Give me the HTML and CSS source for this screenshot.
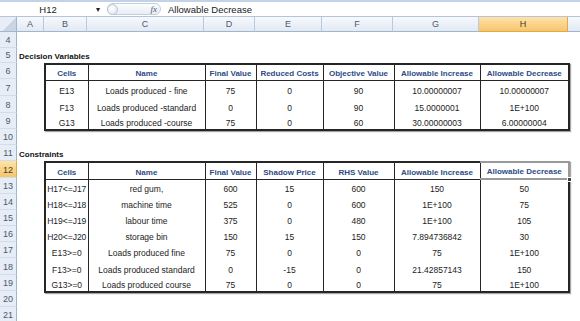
FILE: index.html
```html
<!DOCTYPE html>
<html>
<head>
    <title>Sensitivity Report</title>
    <link rel="stylesheet" href="styles.css">
</head>
<body>
    <div class="formula-bar">
        <div class="name-box">H12</div>
        <span class="name-arrow">&#9662;</span>
        <div class="fx-pill"><span class="pill-knob"></span><span class="fx">fx</span></div>
        <div class="formula">Allowable Decrease</div>
    </div>

    <div class="sheet">
        <div class="corner"></div>
        <div class="col-hdr">A</div>
        <div class="col-hdr">B</div>
        <div class="col-hdr">C</div>
        <div class="col-hdr">D</div>
        <div class="col-hdr">E</div>
        <div class="col-hdr">F</div>
        <div class="col-hdr">G</div>
        <div class="col-hdr active">H</div>
        <div class="col-hdr last"></div>

        <div class="row-hdr">4</div>
        <div class="row-hdr">5</div>
        <div class="row-hdr">6</div>
        <div class="row-hdr">7</div>
        <div class="row-hdr">8</div>
        <div class="row-hdr">9</div>
        <div class="row-hdr">10</div>
        <div class="row-hdr">11</div>
        <div class="row-hdr active">12</div>
        <div class="row-hdr">13</div>
        <div class="row-hdr">14</div>
        <div class="row-hdr">15</div>
        <div class="row-hdr">16</div>
        <div class="row-hdr">17</div>
        <div class="row-hdr">18</div>
        <div class="row-hdr">19</div>
        <div class="row-hdr">20</div>
        <div class="row-hdr">21</div>

        <div class="title title-dec">Decision Variables</div>
        <table class="report report-dec">
            <colgroup>
                <col class="c-b"><col class="c-c"><col class="c-d"><col class="c-e"><col class="c-f"><col class="c-g"><col class="c-h">
            </colgroup>
            <tr class="h16">
                <th>Cells</th><th>Name</th><th>Final Value</th><th>Reduced Costs</th><th>Objective Value</th><th>Allowable Increase</th><th>Allowable Decrease</th>
            </tr>
            <tr class="h17">
                <td>E13</td><td>Loads produced - fine</td><td>75</td><td>0</td><td>90</td><td>10.00000007</td><td>10.00000007</td>
            </tr>
            <tr class="h17">
                <td>F13</td><td>Loads produced -standard</td><td>0</td><td>0</td><td>90</td><td>15.0000001</td><td>1E+100</td>
            </tr>
            <tr class="h16">
                <td>G13</td><td>Loads produced -course</td><td>75</td><td>0</td><td>60</td><td>30.00000003</td><td>6.00000004</td>
            </tr>
        </table>

        <div class="title title-con">Constraints</div>
        <table class="report report-con">
            <colgroup>
                <col class="c-b"><col class="c-c"><col class="c-d"><col class="c-e"><col class="c-f"><col class="c-g"><col class="c-h">
            </colgroup>
            <tr class="h17">
                <th>Cells</th><th>Name</th><th>Final Value</th><th>Shadow Price</th><th>RHS Value</th><th>Allowable Increase</th><th class="sel">Allowable Decrease<span class="handle"></span></th>
            </tr>
            <tr class="h16"><td>H17&lt;=J17</td><td>red gum,</td><td>600</td><td>15</td><td>600</td><td>150</td><td>50</td></tr>
            <tr class="h16"><td>H18&lt;=J18</td><td>machine time</td><td>525</td><td>0</td><td>600</td><td>1E+100</td><td>75</td></tr>
            <tr class="h16"><td>H19&lt;=J19</td><td>labour time</td><td>375</td><td>0</td><td>480</td><td>1E+100</td><td>105</td></tr>
            <tr class="h16"><td>H20&lt;=J20</td><td>storage bin</td><td>150</td><td>15</td><td>150</td><td>7.894736842</td><td>30</td></tr>
            <tr class="h16"><td>E13&gt;=0</td><td>Loads produced fine</td><td>75</td><td>0</td><td>0</td><td>75</td><td>1E+100</td></tr>
            <tr class="h17"><td>F13&gt;=0</td><td>Loads produced standard</td><td>0</td><td>-15</td><td>0</td><td>21.42857143</td><td>150</td></tr>
            <tr class="h16"><td>G13&gt;=0</td><td>Loads produced course</td><td>75</td><td>0</td><td>0</td><td>75</td><td>1E+100</td></tr>
        </table>
    </div>
</body>
</html>
```

FILE: styles.css
```css
* {
    box-sizing: border-box;
}
body {
    margin: 0;
    width: 580px;
    height: 321px;
    overflow: hidden;
    background: #fff;
    font-family: 'Liberation Sans', Arial, sans-serif;
}

/* formula bar */
.formula-bar {
    height: 17px;
    display: flex;
    align-items: center;
    border-top: 2px solid #c4d2e5;
    border-bottom: 1px solid #b4c5db;
    background: #fff;
}
.name-box {
    width: 96px;
    text-align: center;
    font-size: 9.5px;
    color: #222;
}
.name-arrow {
    width: 11px;
    font-size: 8px;
    color: #222;
}
.fx-pill {
    width: 54px;
    height: 12px;
    display: flex;
    align-items: center;
    justify-content: space-between;
    border: 1px solid #c3cfdd;
    border-radius: 7px;
    background: linear-gradient(#fbfcfe, #e8eef6);
    padding: 0 3px 0 0;
}
.pill-knob {
    width: 11px;
    height: 11px;
    margin-left: -1px;
    border-radius: 50%;
    border: 1px solid #b7c4d4;
    background: radial-gradient(circle at 40% 40%, #fff, #dde4ee);
}
.fx {
    font-family: 'Liberation Serif', serif;
    font-style: italic;
    font-size: 9px;
    color: #555;
}
.formula {
    padding-left: 7px;
    font-size: 9.5px;
    color: #222;
}

/* sheet grid */
.sheet {
    display: grid;
    grid-template-columns: 17px 27px 43px 117px 51px 67px 71px 86px 89px 1fr;
    grid-template-rows: 15px 16px 15px 16px 17px 17px 16px 16px 16px 17px 16px 16px 16px 16px 16px 17px 16px 16px 16px;
}
.corner {
    background: linear-gradient(135deg, #e9eef6 55%, #c9d5e4 55%);
    border-right: 1px solid #9eb6ce;
    border-bottom: 1px solid #9eb6ce;
}
.col-hdr {
    display: flex;
    align-items: center;
    justify-content: center;
    font-size: 9px;
    color: #4b5a6e;
    background: linear-gradient(#f7f9fc, #e2e9f3);
    border-right: 1px solid #b9c9dc;
    border-bottom: 1px solid #9eb6ce;
}
.col-hdr.active {
    background: linear-gradient(#fde3a8, #f6c56e);
    border-right-color: #e2a944;
    border-bottom-color: #e2a944;
    color: #4a3d20;
}
.col-hdr.last {
    border-right: none;
}
.row-hdr {
    grid-column: 1;
    display: flex;
    align-items: flex-end;
    justify-content: center;
    padding-bottom: 2px;
    font-size: 9px;
    color: #4b5a6e;
    background: #e6edf7;
    border-right: 1px solid #9eb6ce;
    border-bottom: 1px solid #d2ddea;
}
.row-hdr.active {
    background: linear-gradient(#fde3a8, #f6c56e);
    border-right-color: #e2a944;
    color: #4a3d20;
}

.title {
    grid-column: 2 / 9;
    display: flex;
    align-items: flex-end;
    padding: 0 0 2px 2px;
    font-size: 8px;
    font-weight: bold;
    color: #111;
}
.title-dec { grid-row: 3; }
.title-con { grid-row: 9; }

/* report tables */
.report {
    grid-column: 3 / 10;
    width: 525px;
    height: 100%;
    border-collapse: collapse;
    table-layout: fixed;
    border: 2px solid #262626;
    box-shadow: 1px 1px 1px rgba(0, 0, 0, 0.35);
}
.report-dec { grid-row: 4 / 8; }
.report-con { grid-row: 10 / 18; }

.c-b { width: 43px; }
.c-c { width: 117px; }
.c-d { width: 51px; }
.c-e { width: 67px; }
.c-f { width: 71px; }
.c-g { width: 86px; }
.c-h { width: 89px; }

.h16 { height: 16px; }
.h17 { height: 17px; }

.report th, .report td {
    padding: 0 0 2px;
    text-align: center;
    vertical-align: bottom;
    white-space: nowrap;
    border-left: 1px solid #262626;
    line-height: 1;
}
.report th {
    font-size: 8px;
    font-weight: bold;
    color: #2d4b85;
    border-bottom: 1px solid #262626;
}
.report td {
    font-size: 8.5px;
    color: #1c1c1c;
}
.report th.sel {
    position: relative;
    border: 2px solid #9a9a9a;
    border-left: 1px solid #262626;
}
.handle {
    position: absolute;
    right: -4px;
    bottom: -4px;
    width: 5px;
    height: 5px;
    background: #444;
    border: 1px solid #fff;
}
```
